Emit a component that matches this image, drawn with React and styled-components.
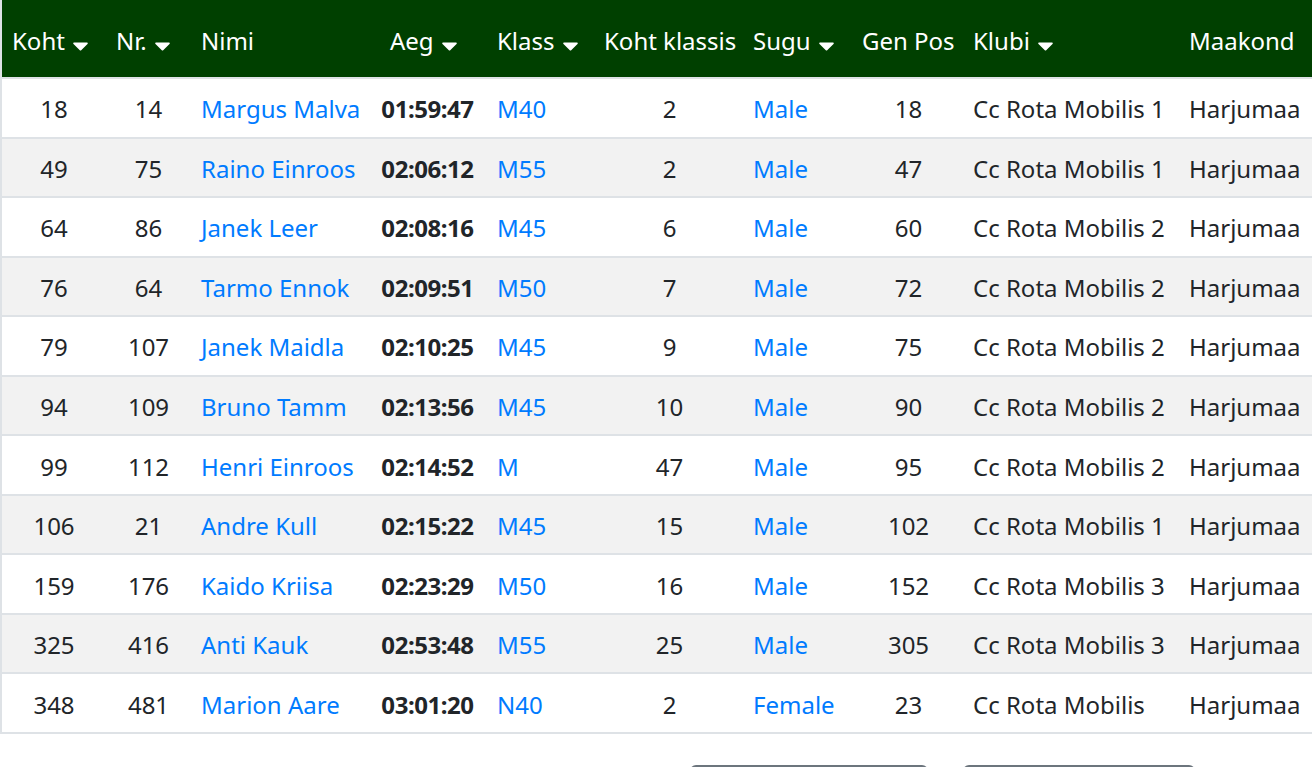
import React from 'react'
import styled, { createGlobalStyle } from 'styled-components'

const GlobalStyle = createGlobalStyle`
  html, body {
    margin: 0;
    padding: 0;
    background: #fff;
    overflow: hidden;
  }
  body {
    font-family: 'Segoe UI', 'Noto Sans', 'Open Sans', sans-serif;
    font-size: 24px;
    color: #212529;
  }
`

const Page = styled.div`
  width: 1312px;
`

const TableWrap = styled.div`
  border-left: 2px solid #dee2e6;
`

const Table = styled.table`
  width: 1310px;
  table-layout: fixed;
  border-collapse: collapse;
`

const HeadCell = styled.th`
  height: 74px;
  padding: 3px 0 0 ${({ first }) => (first ? '10px' : '12px')};
  background: #004000;
  color: #fff;
  font-weight: 400;
  text-align: left;
  white-space: nowrap;
  border-bottom: 2px solid #dee2e6;
`

const Row = styled.tr`
  background: ${({ striped }) => (striped ? '#f2f2f2' : '#fff')};
`

const Cell = styled.td`
  height: 54.55px;
  padding: 3px ${({ shift = 0 }) => 12 - shift}px 0 ${({ shift = 0 }) => 12 + shift}px;
  line-height: 34px;
  text-align: ${({ center }) => (center ? 'center' : 'left')};
  white-space: nowrap;
  border-bottom: 2px solid #dee2e6;
`

const TimeCell = styled(Cell)`
  padding-left: 0;
  padding-right: 8px;
  font-weight: 700;
  letter-spacing: -0.45px;
`

const Link = styled.a`
  color: #007bff;
  text-decoration: none;
`

const Caret = styled.svg`
  width: 15px;
  height: 9px;
  margin-left: 8px;
  vertical-align: -1px;
`

const Pager = styled.div`
  display: flex;
  gap: 35px;
  margin-top: 31px;
  padding-left: 690px;
`

const PagerButton = styled.button`
  width: ${({ w }) => w}px;
  height: 44px;
  border: 2px solid #6c757d;
  border-radius: 6px;
  background: #fff;
  color: #6c757d;
  font: inherit;
`

const columns = [
  { label: 'Koht', width: 102, sort: true },
  { label: 'Nr.', width: 85, sort: true },
  { label: 'Nimi', width: 189 },
  { label: 'Aeg', width: 107, sort: true },
  { label: 'Klass', width: 107, sort: true },
  { label: 'Koht klassis', width: 149 },
  { label: 'Sugu', width: 109, sort: true },
  { label: 'Gen Pos', width: 111 },
  { label: 'Klubi', width: 216, sort: true },
  { label: 'Maakond', width: 135 }
]

const rows = [
  ['18', '14', 'Margus Malva', '01:59:47', 'M40', '2', 'Male', '18', 'Cc Rota Mobilis 1', 'Harjumaa'],
  ['49', '75', 'Raino Einroos', '02:06:12', 'M55', '2', 'Male', '47', 'Cc Rota Mobilis 1', 'Harjumaa'],
  ['64', '86', 'Janek Leer', '02:08:16', 'M45', '6', 'Male', '60', 'Cc Rota Mobilis 2', 'Harjumaa'],
  ['76', '64', 'Tarmo Ennok', '02:09:51', 'M50', '7', 'Male', '72', 'Cc Rota Mobilis 2', 'Harjumaa'],
  ['79', '107', 'Janek Maidla', '02:10:25', 'M45', '9', 'Male', '75', 'Cc Rota Mobilis 2', 'Harjumaa'],
  ['94', '109', 'Bruno Tamm', '02:13:56', 'M45', '10', 'Male', '90', 'Cc Rota Mobilis 2', 'Harjumaa'],
  ['99', '112', 'Henri Einroos', '02:14:52', 'M', '47', 'Male', '95', 'Cc Rota Mobilis 2', 'Harjumaa'],
  ['106', '21', 'Andre Kull', '02:15:22', 'M45', '15', 'Male', '102', 'Cc Rota Mobilis 1', 'Harjumaa'],
  ['159', '176', 'Kaido Kriisa', '02:23:29', 'M50', '16', 'Male', '152', 'Cc Rota Mobilis 3', 'Harjumaa'],
  ['325', '416', 'Anti Kauk', '02:53:48', 'M55', '25', 'Male', '305', 'Cc Rota Mobilis 3', 'Harjumaa'],
  ['348', '481', 'Marion Aare', '03:01:20', 'N40', '2', 'Female', '23', 'Cc Rota Mobilis', 'Harjumaa']
]

function SortCaret() {
  return (
    <Caret viewBox="0 0 15 9">
      <path d="M1.2 0.5h12.6c0.9 0 1.3 1 0.7 1.6L8.2 8.2c-0.4 0.4-1 0.4-1.4 0L0.5 2.1C-0.1 1.5 0.3 0.5 1.2 0.5z" fill="#fff" />
    </Caret>
  )
}

export default function App() {
  return (
    <Page>
      <GlobalStyle />
      <TableWrap>
        <Table>
          <colgroup>
            {columns.map(c => (
              <col key={c.label} style={{ width: c.width }} />
            ))}
          </colgroup>
          <thead>
            <tr>
              {columns.map((c, i) => (
                <HeadCell key={c.label} first={i === 0}>
                  {c.label}
                  {c.sort && <SortCaret />}
                </HeadCell>
              ))}
            </tr>
          </thead>
          <tbody>
            {rows.map((r, i) => (
              <Row key={r[0]} striped={i % 2 === 1}>
                <Cell center shift={1}>{r[0]}</Cell>
                <Cell center shift={2}>{r[1]}</Cell>
                <Cell>
                  <Link href="#">{r[2]}</Link>
                </Cell>
                <TimeCell center>{r[3]}</TimeCell>
                <Cell>
                  <Link href="#">{r[4]}</Link>
                </Cell>
                <Cell center shift={3}>{r[5]}</Cell>
                <Cell>
                  <Link href="#">{r[6]}</Link>
                </Cell>
                <Cell center shift={3}>{r[7]}</Cell>
                <Cell>{r[8]}</Cell>
                <Cell>{r[9]}</Cell>
              </Row>
            ))}
          </tbody>
        </Table>
      </TableWrap>
      <Pager>
        <PagerButton w={238} />
        <PagerButton w={232} />
      </Pager>
    </Page>
  )
}
